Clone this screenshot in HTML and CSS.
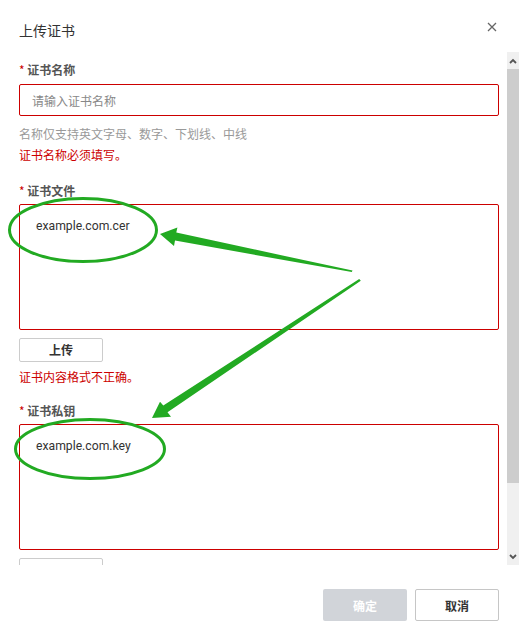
FILE: index.html
```html
<!DOCTYPE html>
<html lang="zh-CN">
<head>
<meta charset="utf-8">
<title>上传证书</title>
<link rel="stylesheet" href="styles.css">
</head>
<body>
<div class="dialog">
  <div class="header">
    <div class="title">上传证书</div>
    <div class="close">
      <svg width="10" height="10" viewBox="0 0 10 10"><path d="M1 1 L9 9 M9 1 L1 9" stroke="#666" stroke-width="1.3" fill="none"/></svg>
    </div>
  </div>
  <div class="body">
    <div class="content">
      <div class="field f1">
        <div class="label"><span class="req">*</span> 证书名称</div>
        <div class="input"><span class="ph">请输入证书名称</span></div>
        <div class="hint">名称仅支持英文字母、数字、下划线、中线</div>
        <div class="error e1">证书名称必须填写。</div>
      </div>
      <div class="field f2">
        <div class="label"><span class="req">*</span> 证书文件</div>
        <div class="textarea">example.com.cer</div>
        <div class="upload">上传</div>
        <div class="error e2">证书内容格式不正确。</div>
      </div>
      <div class="field f3">
        <div class="label"><span class="req">*</span> 证书私钥</div>
        <div class="textarea">example.com.key</div>
        <div class="upload"></div>
      </div>
    </div>
    <div class="scrollbar">
      <div class="sb-btn">
        <svg width="8" height="6" viewBox="0 0 8 6"><path d="M1 5 L4 2 L7 5" stroke="#555" stroke-width="1.8" fill="none"/></svg>
      </div>
      <div class="sb-thumb"></div>
      <div class="sb-track"></div>
      <div class="sb-btn">
        <svg width="8" height="6" viewBox="0 0 8 6"><path d="M1 1 L4 4 L7 1" stroke="#555" stroke-width="1.8" fill="none"/></svg>
      </div>
    </div>
  </div>
  <div class="footer">
    <div class="btn btn-ok">确定</div>
    <div class="btn btn-cancel">取消</div>
  </div>
</div>
<svg class="overlay" width="519" height="625" viewBox="0 0 519 625">
  <g fill="none" stroke="#22aa22" stroke-width="3">
    <ellipse cx="83" cy="230" rx="73.5" ry="31.5"/>
    <ellipse cx="90" cy="449" rx="74.5" ry="29.5"/>
  </g>
  <g fill="#22aa22">
    <polygon points="160,234 177.4,227.6 176.3,232.6 352.5,270.6 351.8,272 175,240.6 174,246"/>
    <polygon points="152,418 160,401.7 163.3,405.6 359.2,279 360.8,280.8 167.5,412.2 171,416.8"/>
  </g>
</svg>
</body>
</html>
```

FILE: styles.css
```css
html, body {
  margin: 0;
  padding: 0;
  background: #fff;
}
body {
  font-family: "Noto Sans CJK SC", "Noto Sans", sans-serif;
  color: #333;
}
.dialog {
  width: 519px;
  height: 625px;
  display: flex;
  flex-direction: column;
  background: #fff;
}
.header {
  height: 52px;
  flex: none;
  display: flex;
  align-items: flex-start;
  justify-content: space-between;
  padding: 0 22px 0 19px;
  box-sizing: border-box;
}
.title {
  margin-top: 20px;
  font-size: 14px;
  line-height: 20px;
  color: #333;
}
.close {
  margin-top: 22px;
  width: 10px;
  height: 10px;
  display: flex;
}
.body {
  height: 513px;
  flex: none;
  display: flex;
}
.content {
  flex: 1;
  overflow: hidden;
  padding: 8px 8px 0 19px;
}
.field {
  display: flex;
  flex-direction: column;
}
.f1 { margin-bottom: 17px; }
.f2 { margin-bottom: 15px; }
.label {
  height: 20px;
  line-height: 20px;
  font-size: 12px;
  font-weight: bold;
  color: #555;
}
.req {
  color: #c00;
  font-weight: normal;
}
.input {
  margin-top: 4px;
  height: 32px;
  box-sizing: border-box;
  border: 1px solid #c00;
  border-radius: 2px;
  padding-left: 12px;
  display: flex;
  align-items: center;
  font-size: 12px;
}
.ph {
  color: #888;
}
.hint {
  margin-top: 9px;
  line-height: 18px;
  font-size: 12px;
  color: #999;
}
.error {
  line-height: 18px;
  font-size: 12px;
  color: #c00;
}
.e1 { margin-top: 3px; }
.e2 { margin-top: 6px; }
.textarea {
  margin-top: 3px;
  height: 126px;
  box-sizing: border-box;
  border: 1px solid #c00;
  border-radius: 2px;
  padding: 11px 16px;
  font-family: Roboto, "Liberation Sans", "Noto Sans CJK SC", sans-serif;
  font-size: 12.2px;
  line-height: 20px;
  color: #333;
}
.upload {
  margin-top: 8px;
  width: 84px;
  height: 24px;
  box-sizing: border-box;
  border: 1px solid #ccc;
  border-radius: 2px;
  text-align: center;
  line-height: 22px;
  font-size: 12px;
  font-weight: bold;
  color: #333;
}
.scrollbar {
  width: 12px;
  flex: none;
  display: flex;
  flex-direction: column;
  background: #f0f0f0;
}
.sb-btn {
  height: 17px;
  flex: none;
  display: flex;
  align-items: center;
  justify-content: center;
  background: #f0f0f0;
}
.sb-thumb {
  height: 414px;
  flex: none;
  background: #cdcdcd;
}
.sb-track {
  flex: 1;
  background: #f0f0f0;
}
.footer {
  flex: 1;
  display: flex;
  justify-content: flex-end;
  align-items: flex-start;
  gap: 8px;
  padding: 24px 20px 0 0;
}
.btn {
  width: 84px;
  height: 32px;
  box-sizing: border-box;
  border-radius: 2px;
  display: flex;
  align-items: center;
  justify-content: center;
  font-size: 12px;
  font-weight: bold;
}
.btn-ok {
  background: #d1d4d9;
  color: #fff;
}
.btn-cancel {
  border: 1px solid #c6c6c6;
  background: #fff;
  color: #333;
}
.overlay {
  position: absolute;
  left: 0;
  top: 0;
  pointer-events: none;
}
```
